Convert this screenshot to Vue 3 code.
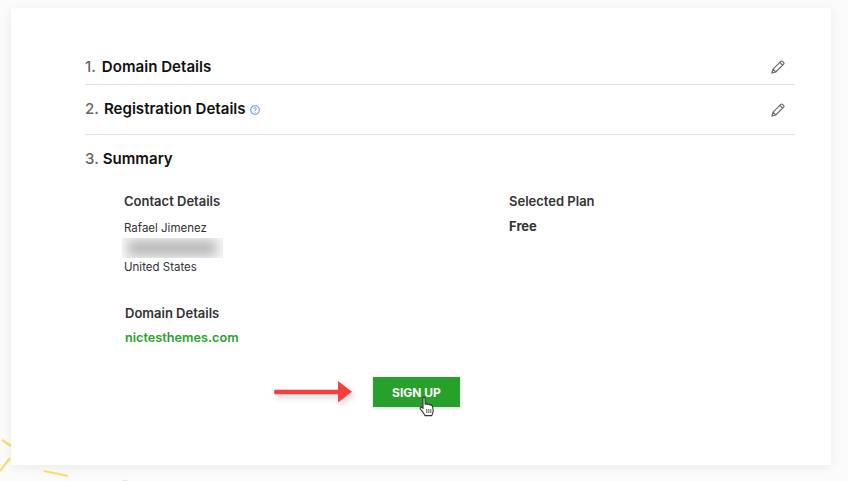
<script setup>
const contact = ['Rafael Jimenez']
</script>

<template>
  <div class="page">
    <svg class="confetti" width="140" height="60" viewBox="0 0 140 60">
      <path d="M2 15 L11 21 M10 33 L0 46 M44 46 L68 51" stroke="#fbdc6a" stroke-width="2.2" fill="none" />
      <circle cx="125" cy="59" r="4" fill="#f9d9c4" />
    </svg>
    <main class="card">
      <section class="step first">
        <h2 class="title"><span class="num">1.</span>Domain Details</h2>
        <svg class="pencil" width="14" height="14" viewBox="0 0 14 14"><path d="M1 13 L2 9.2 L9.8 1.4 Q10.6 .7 11.4 1.4 L12.6 2.6 Q13.3 3.4 12.6 4.2 L4.8 12 Z M2 9.2 L4.8 12 M8.8 2.4 L11.6 5.2" fill="none" stroke="#666" stroke-width="1.2" /></svg>
      </section>
      <section class="step second">
        <h2 class="title"><span class="num">2.</span>Registration Details
          <svg class="help" width="10" height="10" viewBox="0 0 10 10"><circle cx="5" cy="5" r="4.3" fill="none" stroke="#5b9bdc" stroke-width="1.1" /><path d="M3.6 4 Q3.7 2.8 5 2.8 Q6.4 2.8 6.4 3.9 Q6.4 4.6 5 5.2 L5 6" fill="none" stroke="#5b9bdc" stroke-width=".9" /><circle cx="5" cy="7.2" r=".55" fill="#5b9bdc" /></svg>
        </h2>
        <svg class="pencil" width="14" height="14" viewBox="0 0 14 14"><path d="M1 13 L2 9.2 L9.8 1.4 Q10.6 .7 11.4 1.4 L12.6 2.6 Q13.3 3.4 12.6 4.2 L4.8 12 Z M2 9.2 L4.8 12 M8.8 2.4 L11.6 5.2" fill="none" stroke="#666" stroke-width="1.2" /></svg>
      </section>
      <section class="summary">
        <h2 class="title"><span class="num">3.</span>Summary</h2>
        <div class="columns">
          <div class="contact">
            <h3 class="label">Contact Details</h3>
            <p class="line" v-for="c in contact" :key="c">{{ c }}</p>
            <div class="redacted"><div class="smear"></div></div>
            <p class="line">United States</p>
          </div>
          <div class="plan">
            <h3 class="label">Selected Plan</h3>
            <p class="free">Free</p>
          </div>
        </div>
        <div class="domain">
          <h3 class="label">Domain Details</h3>
          <p class="link">nictesthemes.com</p>
        </div>
        <div class="action">
          <svg class="arrow" width="84" height="30" viewBox="0 0 84 30">
            <path d="M4 13.5 H68 V16.5 H4 Z" fill="#f43f3f" stroke="#f43f3f" stroke-width="1.6" stroke-linejoin="round" />
            <path d="M67 4 L81 14.8 L67 25.5 Z" fill="#f43f3f" />
          </svg>
          <div class="btn-wrap">
            <button class="btn">SIGN UP</button>
            <svg class="cursor" width="16" height="21" viewBox="0 0 16 21">
              <path d="M4 1.6 Q5.5 .8 6 2.4 L6.2 8.2 Q8 7.4 8.6 8.4 Q10.3 7.8 10.9 9 Q12.7 8.6 13.3 10 L14.2 14 Q14.2 17 12.8 19.6 L6 19.6 Q4.8 17 1.4 13.2 Q.6 11.4 2.2 11 L4 12.4 Z" fill="#fff" stroke="#333" stroke-width="1.1" stroke-linejoin="round" />
              <path d="M7.8 13 V17 M9.8 13 V17 M11.8 13 V17" stroke="#333" stroke-width=".8" />
            </svg>
          </div>
        </div>
      </section>
    </main>
  </div>
</template>

<style scoped>
.page {
  position: relative;
  width: 848px;
  height: 481px;
  box-sizing: border-box;
  padding: 8px 17px 16px 11px;
  background: #fbfbfb;
  overflow: hidden;
  font-family: Inter, "Liberation Sans", sans-serif;
  color: #111;
}
.confetti { position: absolute; left: 0; top: 425px; }
.card {
  position: relative;
  height: 457px;
  box-sizing: border-box;
  padding: 36px 36px 0 74px;
  background: #fff;
  box-shadow: 0 2px 10px rgba(0, 0, 0, .07);
}
.step {
  display: flex;
  justify-content: space-between;
  align-items: center;
  border-bottom: 1px solid #e2e2e2;
  box-sizing: border-box;
}
.first { height: 41px; padding-top: 5px; }
.second { height: 50px; padding-bottom: 2px; }
.pencil { margin-right: 10px; }
.second .pencil { margin-top: 2px; }
.title {
  margin: 0;
  font-size: 15.1px;
  font-weight: 600;
  line-height: 20px;
}
.num { color: #666; margin-right: 5px; font-weight: 500; }
.first .num { margin-right: 6px; }
.summary .num { margin-right: 4px; }
.help { margin-left: 1px; vertical-align: -1px; }
.summary { padding-top: 14px; }
.columns { display: flex; margin-top: 23px; padding-left: 39px; }
.contact { width: 385px; }
.label {
  margin: 0;
  font-size: 13px;
  font-weight: 600;
  line-height: 18px;
  color: #333;
}
.line {
  margin: 0;
  font-size: 11.5px;
  line-height: 16px;
  color: #333;
}
.contact .label { margin-bottom: 10px; }
.redacted {
  width: 101px;
  height: 20px;
  margin: 2px 0 1px -2px;
  background: #f6f6f6;
  overflow: hidden;
}
.smear {
  width: 88px;
  height: 14px;
  margin: 3px 0 0 6px;
  background: #b0b0b0;
  filter: blur(6px);
}
.free { margin: 7px 0 0; font-size: 13px; font-weight: 700; color: #333; line-height: 18px; }
.domain { padding-left: 40px; margin-top: 29px; }
.link { margin: 7px 0 0; font-size: 12.7px; font-weight: 600; color: #2aa22e; line-height: 18px; }
.action { display: flex; align-items: center; margin-top: 30px; padding-left: 186px; }
.arrow { margin-right: 18px; filter: drop-shadow(2px 3px 3px rgba(0, 0, 0, .18)); }
.btn-wrap { position: relative; }
.btn {
  display: block;
  width: 87px;
  height: 30px;
  padding: 0;
  border: 0;
  background: #27a02c;
  color: #fff;
  font: 700 12px Inter, "Liberation Sans", sans-serif;
  box-shadow: 0 1px 3px rgba(0, 0, 0, .15);
}
.cursor { position: absolute; left: 46px; top: 19px; }
</style>
